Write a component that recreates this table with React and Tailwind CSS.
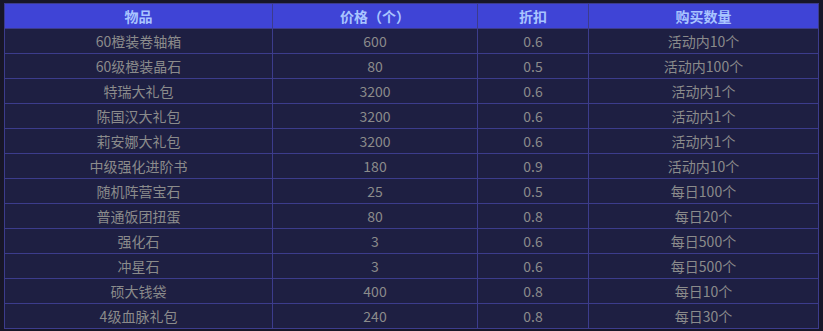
const rows = [
  ["60橙装卷轴箱", "600", "0.6", "活动内10个"],
  ["60级橙装晶石", "80", "0.5", "活动内100个"],
  ["特瑞大礼包", "3200", "0.6", "活动内1个"],
  ["陈国汉大礼包", "3200", "0.6", "活动内1个"],
  ["莉安娜大礼包", "3200", "0.6", "活动内1个"],
  ["中级强化进阶书", "180", "0.9", "活动内10个"],
  ["随机阵营宝石", "25", "0.5", "每日100个"],
  ["普通饭团扭蛋", "80", "0.8", "每日20个"],
  ["强化石", "3", "0.6", "每日500个"],
  ["冲星石", "3", "0.6", "每日500个"],
  ["硕大钱袋", "400", "0.8", "每日10个"],
  ["4级血脉礼包", "240", "0.8", "每日30个"],
];

const headers = ["物品", "价格（个）", "折扣", "购买数量"];

export default function App() {
  return (
    <div
      className="w-[823px] h-[331px] bg-[#171628] pt-[3px] pl-[4px]"
      style={{ fontFamily: '"Microsoft YaHei", "Noto Sans CJK SC", sans-serif' }}
    >
      <table className="table-fixed border-collapse w-[814px] text-[14px] leading-none">
        <colgroup>
          <col className="w-[268px]" />
          <col className="w-[205px]" />
          <col className="w-[111px]" />
          <col className="w-[230px]" />
        </colgroup>
        <thead>
          <tr className="h-[25px] bg-[#3f44d6]">
            {headers.map((h) => (
              <th key={h} className="border border-[#3c3c8c] text-center font-bold text-[#a9c4ff] p-0">
                {h}
              </th>
            ))}
          </tr>
        </thead>
        <tbody>
          {rows.map((r) => (
            <tr key={r[0]} className="h-[25px] bg-[#1e1f42]">
              {r.map((c, i) => (
                <td key={i} className="border border-[#3c3c8c] text-center text-[#8b8b8b] p-0">
                  {c}
                </td>
              ))}
            </tr>
          ))}
        </tbody>
      </table>
    </div>
  );
}
